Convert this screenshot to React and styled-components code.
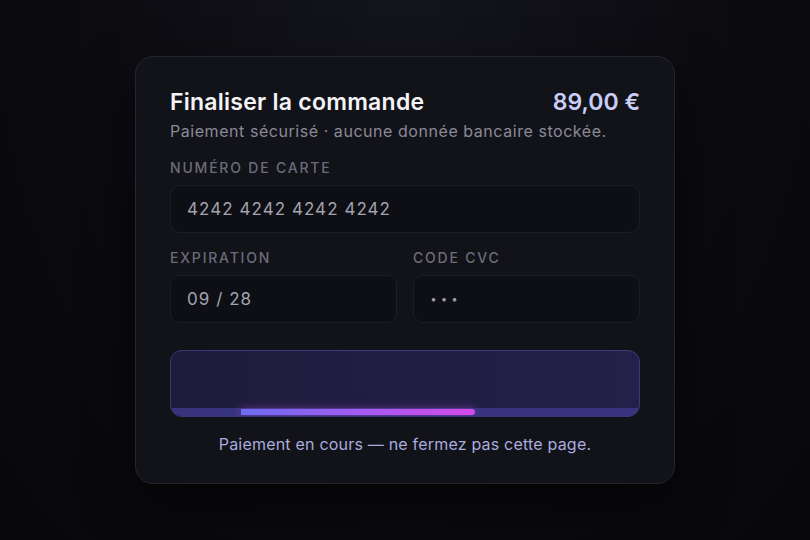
import React from "react";
import styled, { createGlobalStyle } from "styled-components";

const GlobalStyle = createGlobalStyle`
  html, body {
    margin: 0;
    padding: 0;
    background: #09090d;
  }
  * { box-sizing: border-box; }
`;

const Page = styled.div`
  width: 810px;
  height: 540px;
  display: flex;
  align-items: center;
  justify-content: center;
  background: radial-gradient(ellipse at 50% 0%, #14141c 0%, #0b0b10 55%, #08080b 100%);
  font-family: Inter, "Noto Sans", sans-serif;
`;

const Card = styled.div`
  width: 540px;
  height: 428px;
  padding: 32px 34px 29px;
  background: #121219;
  border: 1px solid #25252f;
  border-radius: 18px;
  box-shadow: 0 20px 50px rgba(0, 0, 0, 0.55);
  display: flex;
  flex-direction: column;
`;

const Header = styled.div`
  display: flex;
  justify-content: space-between;
  align-items: center;
`;

const Title = styled.h1`
  margin: 0;
  font-size: 23px;
  line-height: 26px;
  font-weight: 600;
  color: #f4f4f7;
  letter-spacing: 0.25px;
`;

const Price = styled.span`
  font-size: 23px;
  line-height: 26px;
  font-weight: 600;
  color: #c9cdf6;
`;

const Subtitle = styled.p`
  margin: 6px 0 0;
  font-size: 16px;
  line-height: 20px;
  color: #8a8a98;
  letter-spacing: 0.55px;
`;

const Field = styled.div`
  display: flex;
  flex-direction: column;
  gap: 9px;
  margin-top: ${(p) => p.$top}px;
`;

const Label = styled.label`
  font-size: 14px;
  line-height: 16px;
  font-weight: 500;
  letter-spacing: 1.8px;
  text-transform: uppercase;
  color: #6c6c79;
`;

const Input = styled.div`
  height: 48px;
  display: flex;
  align-items: center;
  padding: 0 16px;
  background: #0e0e15;
  border: 1px solid #1d1d27;
  border-radius: 10px;
  font-size: ${(p) => (p.$dots ? "21px" : "17px")};
  font-weight: ${(p) => (p.$dots ? 700 : 400)};
  letter-spacing: ${(p) => (p.$dots ? "3.5px" : "1.05px")};
  color: ${(p) => (p.$dots ? "#9a9aa6" : "#a3a3af")};
`;

const Row = styled.div`
  display: grid;
  grid-template-columns: 1fr 1fr;
  gap: 16px;
  margin-top: 17px;
`;

const PayButton = styled.div`
  position: relative;
  margin-top: 27px;
  height: 68px;
  border-radius: 12px;
  border: 1px solid #3d3978;
  background: linear-gradient(90deg, #1e1c3b 0%, #24204a 100%);
  overflow: hidden;
`;

const Track = styled.div`
  position: absolute;
  left: 0;
  right: 0;
  bottom: 0;
  height: 8px;
  background: #37337c;
`;

const Fill = styled.div`
  position: absolute;
  top: 1px;
  bottom: 1px;
  border-radius: 0 4px 4px 0;
  background: linear-gradient(90deg, #6b6cf0 0%, #a25cf0 50%, #d44ae8 100%);
  box-shadow: 0 0 8px rgba(190, 80, 240, 0.5);
`;

const Caption = styled.p`
  margin: 17px 0 0;
  text-align: center;
  font-size: 16px;
  line-height: 20px;
  color: #a9acde;
  letter-spacing: 0.2px;
`;

export default function App() {
  const progress = { start: 70, width: 234 };
  return (
    <>
      <GlobalStyle />
      <Page>
        <Card>
          <Header>
            <Title>Finaliser la commande</Title>
            <Price>89,00 €</Price>
          </Header>
          <Subtitle>Paiement sécurisé · aucune donnée bancaire stockée.</Subtitle>

          <Field $top={19}>
            <Label>Numéro de carte</Label>
            <Input>4242 4242 4242 4242</Input>
          </Field>

          <Row>
            <Field $top={0}>
              <Label>Expiration</Label>
              <Input>09 / 28</Input>
            </Field>
            <Field $top={0}>
              <Label>Code CVC</Label>
              <Input $dots>···</Input>
            </Field>
          </Row>

          <PayButton>
            <Track>
              <Fill style={{ left: progress.start, width: progress.width }} />
            </Track>
          </PayButton>

          <Caption>Paiement en cours — ne fermez pas cette page.</Caption>
        </Card>
      </Page>
    </>
  );
}
